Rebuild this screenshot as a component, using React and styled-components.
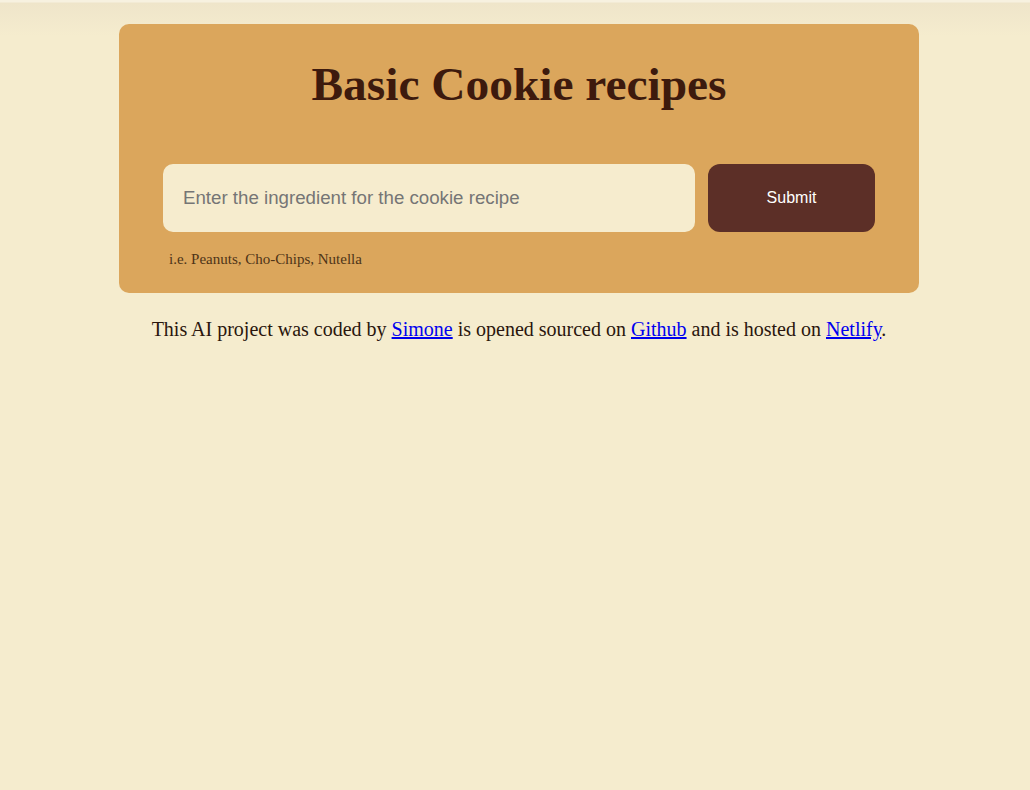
import React from "react";
import styled, { createGlobalStyle } from "styled-components";

const GlobalStyle = createGlobalStyle`
    html, body {
        margin: 0;
        padding: 0;
        background: #F5ECCE;
    }
    body {
        min-height: 790px;
        font-family: "Liberation Serif", "Times New Roman", serif;
        background: linear-gradient(to bottom, #F7F1E0 0px, #F7F1E0 2px, #EFE5CA 3px, #F5ECCE 36px, #F5ECCE 100%);
    }
`;

const Page = styled.div`
    padding: 24px 0 0 8px;
`;

const Container = styled.div`
    width: 800px;
    margin: 0 auto;
`;

const Card = styled.header`
    background: #DBA65C;
    border-radius: 10px;
    padding: 30px 44px 25px;
`;

const Title = styled.h1`
    margin: 0 0 50px;
    text-align: center;
    font-family: "Liberation Serif", "Times New Roman", serif;
    font-weight: bold;
    font-size: 47.4px;
    line-height: 60px;
    color: #3D1A0D;
`;

const SearchForm = styled.form`
    display: flex;
    gap: 13px;
`;

const SearchInput = styled.input`
    flex: 0 0 532px;
    height: 68px;
    box-sizing: border-box;
    border: none;
    outline: none;
    border-radius: 10px;
    background: #F6ECCE;
    padding: 0 20px;
    font-family: "Liberation Sans", Arial, sans-serif;
    font-size: 18.7px;
    color: #333;

    &::placeholder {
        color: #757575;
    }
`;

const SubmitButton = styled.button`
    width: 167px;
    height: 68px;
    border: none;
    border-radius: 12px;
    background: #5C2F27;
    color: #FFF;
    font-family: "Liberation Sans", Arial, sans-serif;
    font-size: 16px;
    cursor: pointer;
`;

const Hint = styled.small`
    display: block;
    margin: 19px 0 0 6px;
    font-size: 15px;
    color: #4E3418;
`;

const Footer = styled.p`
    margin: 25px 0 0;
    text-align: center;
    font-size: 20px;
    color: #2A160D;

    a {
        color: #0000EE;
    }
`;

export default function App() {
    return (
        <>
            <GlobalStyle/>
            <Page>
                <Container>
                    <Card>
                        <Title>Basic Cookie recipes</Title>
                        <SearchForm onSubmit={e => e.preventDefault()}>
                            <SearchInput type="search" placeholder="Enter the ingredient for the cookie recipe"/>
                            <SubmitButton type="submit">Submit</SubmitButton>
                        </SearchForm>
                        <Hint>i.e. Peanuts, Cho-Chips, Nutella</Hint>
                    </Card>
                    <Footer>
                        This AI project was coded by <a href="#">Simone</a> is opened sourced on{" "}
                        <a href="#">Github</a> and is hosted on <a href="#">Netlify</a>.
                    </Footer>
                </Container>
            </Page>
        </>
    );
}
